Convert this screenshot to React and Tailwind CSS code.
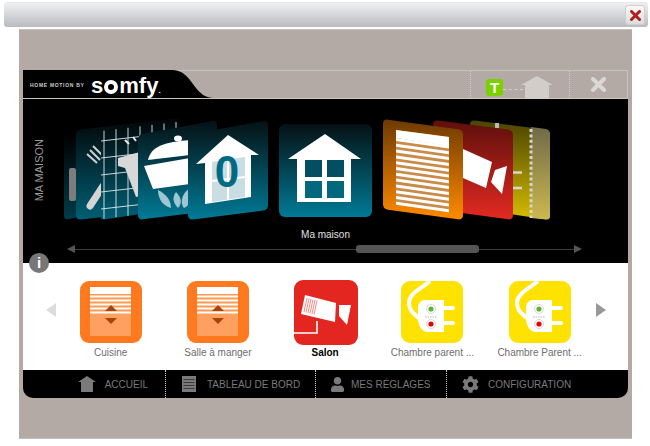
import React from 'react';
import { FaCog, FaUser } from 'react-icons/fa';

const font = { fontFamily: '"Liberation Sans", Arial, sans-serif' };

// four corner quad with rounded corners, points in page coordinates
const quad = (pts, r = 5) => {
  let d = '';
  pts.forEach((p, i) => {
    const prev = pts[(i + 3) % 4];
    const next = pts[(i + 1) % 4];
    const toward = (a, b) => {
      const len = Math.hypot(b[0] - a[0], b[1] - a[1]);
      return [a[0] + ((b[0] - a[0]) * r) / len, a[1] + ((b[1] - a[1]) * r) / len];
    };
    const s = toward(p, prev);
    const e = toward(p, next);
    d += `${i === 0 ? 'M' : 'L'}${s[0]} ${s[1]} Q${p[0]} ${p[1]} ${e[0]} ${e[1]} `;
  });
  return d + 'Z';
};

const Grad = ({ id, from, to }) => (
  <linearGradient id={id} x1="0" y1="0" x2="0" y2="1">
    <stop offset="0" stopColor={from} />
    <stop offset="1" stopColor={to} />
  </linearGradient>
);

const Carousel = () => {
  const blinds = [];
  for (let i = 0; i < 12; i++) {
    const y = 138 + i * 5.8;
    blinds.push(<polygon key={i} points={`396,${y} 449,${y + 7.5} 449,${y + 10.5} 396,${y + 3}`} fill="#fff" />);
  }
  const tilesV = [104, 116, 128, 140, 152, 164, 176];
  const tilesH = [141, 158, 175, 192, 209];

  return (
    <svg width="573" height="125" viewBox="55 99 573 125" className="block">
      <defs>
        <Grad id="teal" from="#051114" to="#007a96" />
        <Grad id="tealDark" from="#020608" to="#005f75" />
        <Grad id="tealDeep" from="#000" to="#003c48" />
        <Grad id="orange" from="#6e3a00" to="#ff8a00" />
        <Grad id="red" from="#5e0f0c" to="#e32a22" />
        <Grad id="yellow" from="#4a4300" to="#d6bd00" />
        <Grad id="yellowLight" from="#6f6a48" to="#cdb94f" />
      </defs>

      {/* left stack */}
      <path d={quad([[64, 137], [90, 132], [90, 215], [64, 220]], 4)} fill="url(#tealDeep)" />
      <rect x="69" y="168" width="7" height="33" rx="2" fill="#7d7d7d" />
      <path d={quad([[76, 130], [180, 118], [180, 208], [76, 220]], 5)} fill="url(#tealDark)" />
      <path d="M90 206 L103 186" stroke="#d4d4d4" strokeWidth="7" strokeLinecap="round" />
      <path d="M87 154 L97 163 M90 150 L100 160 M93 146 L102 155" stroke="#cfcfcf" strokeWidth="2" />
      <path d={quad([[101, 130], [180, 120], [180, 208], [101, 220]], 3)} fill="url(#tealDark)" />
      <g stroke="#dfe9eb" strokeWidth="0.9">
        {tilesV.map((x) => (
          <line key={x} x1={x} y1={131 - (x - 101) * 0.12} x2={x} y2={219 - (x - 101) * 0.12} />
        ))}
        {tilesH.map((y) => (
          <line key={y} x1="101" y1={y} x2="180" y2={y - 9} />
        ))}
      </g>
      <polygon points="118,158 140,152 140,196 136,197 125,168 118,166" fill="#d8d8d8" />
      <path d="M125 140 L129 144 M133 137 L136 141" stroke="#e8e8e8" strokeWidth="2" />
      <path d={quad([[138, 135], [217, 120], [217, 210], [138, 220]], 5)} fill="url(#teal)" />
      <path d="M148 160 C151 146 165 142 190 140 L190 155 Z" fill="#fff" />
      <ellipse cx="178" cy="138.5" rx="4" ry="3" fill="#fff" />
      <polygon points="144,166 190,158 190,184 153,189" fill="#fff" />
      <path d="M158 190 C166 194 171 200 171 208 C163 206 158 199 158 190 Z M176 192 C181 197 183 203 178 208 C173 203 172 197 176 192 Z M190 188 C180 195 181 204 184 208 C190 206 191 199 190 188 Z" fill="#9cc7d2" />

      {/* house with counter */}
      <path d={quad([[188, 135], [268, 120], [268, 210], [188, 220]], 5)} fill="url(#teal)" />
      <polygon points="228,135 259,155 251,155 251,197 205,204 205,163 196,164" fill="#fff" />
      <polygon points="212,162 245,157 245,197 212,202" fill="#c9dde3" />
      <path d="M228 160 V200 M212 181 L245 177" stroke="#fff" strokeWidth="2" />
      <text x="227" y="187" textAnchor="middle" fontSize="44" fontWeight="700" fill="#006a85" style={font}>0</text>

      {/* right stack */}
      <path d={quad([[470, 120], [550, 130], [550, 220], [470, 208]], 5)} fill="url(#yellow)" />
      <path d="M531 127 L546 129 Q550 130 550 134 L550 216 Q550 220 546 219.5 L531 218 Z" fill="url(#yellowLight)" />
      <line x1="531" y1="129" x2="531" y2="218" stroke="#d4d4d4" strokeWidth="3" strokeDasharray="3 2.4" />
      <rect x="495" y="123" width="4" height="5" fill="#bbb" />
      <path d="M512 172.5 H522 M512 188 H522" stroke="#d8d8c8" strokeWidth="2.5" />
      <path d={quad([[433, 120], [513, 130], [513, 220], [433, 209]], 5)} fill="url(#red)" />
      <polygon points="463,149 492,162 486,188 463,178" fill="#fff" />
      <polygon points="495,170 507,166 502,194 491,182" fill="#fff" />
      <path d={quad([[383, 119], [463, 130], [463, 220], [383, 209]], 5)} fill="url(#orange)" />
      <polygon points="396,130 449,137 449,211 396,203" fill="#c98b4a" />
      <polygon points="396,130 449,137 449,146 396,138" fill="#fff" />
      {blinds}

      {/* selected */}
      <rect x="279" y="124" width="93" height="93" rx="6" fill="url(#teal)" />
      <polygon points="325,134 361,159 351,159 351,202 297,202 297,159 288,159" fill="#fff" />
      <rect x="305" y="160" width="17" height="17" fill="#024f61" />
      <rect x="327" y="160" width="17" height="17" fill="#024f61" />
      <rect x="305" y="181" width="17" height="17" fill="#03677e" />
      <rect x="327" y="181" width="17" height="17" fill="#03677e" />
    </svg>
  );
};

const BlindIcon = () => (
  <svg width="62" height="62" viewBox="0 0 62 62" className="block">
    <rect width="62" height="62" rx="9" fill="#ff7a1e" />
    <rect x="10" y="6" width="41" height="49" fill="#ffa060" />
    <rect x="10" y="6" width="41" height="26" fill="#ff9850" />
    <rect x="10" y="6" width="41" height="7" fill="#fff" />
    {[14.5, 18.5, 22.5, 26.5, 30.5].map((y) => (
      <rect key={y} x="10" y={y} width="41" height="2" fill="#fff" />
    ))}
    <polygon points="31,24 25,30 37,30" fill="#a4470f" />
    <polygon points="25,37 37,37 31,43" fill="#a4470f" />
  </svg>
);

const CameraIcon = () => (
  <svg width="64" height="65" viewBox="0 0 64 65" className="block">
    <rect width="64" height="65" rx="9" fill="#e3261f" />
    <polygon points="11,15 42,23 41,42 7,34" fill="#fff" />
    <g stroke="#ef8d88" strokeWidth="1">
      <line x1="13" y1="18" x2="10" y2="32" />
      <line x1="15" y1="18.5" x2="12" y2="32.5" />
      <line x1="17" y1="19" x2="14" y2="33" />
      <line x1="19" y1="19.5" x2="16" y2="33.5" />
      <line x1="21" y1="20" x2="18" y2="34" />
      <line x1="23" y1="20.5" x2="20" y2="34.5" />
    </g>
    <polygon points="45,25 57,25 53,45 45,36" fill="#fff" />
    <path d="M23 41 V53 H0" fill="none" stroke="#fff" strokeWidth="1.6" />
  </svg>
);

const PlugIcon = () => (
  <svg width="62" height="62" viewBox="0 0 62 62" className="block">
    <rect width="62" height="62" rx="9" fill="#ffe200" />
    <path d="M29 0 C20 8 8 12 8 22 C8 30 13 33 18 37" fill="none" stroke="#fff" strokeWidth="4" />
    <path d="M24 19 H43 V51 H27 C21 51 17 45 17 37 V27 C17 22 20 19 24 19 Z" fill="#fff" />
    <path d="M43 27 H52 M43 42 H52" stroke="#fff" strokeWidth="4" strokeLinecap="round" />
    <circle cx="30" cy="28" r="4.5" fill="#fff" stroke="#c8c8c8" strokeWidth="0.7" />
    <circle cx="30" cy="28" r="2.6" fill="#5db52e" />
    <circle cx="30" cy="43" r="4.5" fill="#fff" stroke="#c8c8c8" strokeWidth="0.7" />
    <circle cx="30" cy="43" r="2.6" fill="#f00000" />
    <line x1="24" y1="36" x2="36" y2="36" stroke="#b5b5b5" strokeWidth="1.2" strokeDasharray="1.5 1" />
  </svg>
);

const rooms = [
  { label: 'Cuisine', icon: <BlindIcon /> },
  { label: 'Salle à manger', icon: <BlindIcon /> },
  { label: 'Salon', icon: <CameraIcon />, active: true },
  { label: 'Chambre parent ...', icon: <PlugIcon /> },
  { label: 'Chambre Parent ...', icon: <PlugIcon /> },
];

const Dots = () => <div className="h-full w-0 border-l border-dotted border-[#cfcfcf]" />;

const App = () => {
  return (
    <div className="w-[650px] h-[446px] bg-white pt-[2px] overflow-hidden" style={font}>
      <div className="ml-[4px] w-[644px] h-[25px] rounded-[3px] border-t border-[#e8e8e8] bg-gradient-to-b from-[#eef0f2] to-[#b9bbbe] flex items-center justify-end pr-[3px]">
        <button className="w-[20px] h-[20px] rounded-[3px] border border-[#cfcfcf] bg-gradient-to-b from-[#fafafa] to-[#dcdcdc] flex items-center justify-center">
          <svg width="11" height="11" viewBox="0 0 11 11">
            <path d="M1.5 1.5 L9.5 9.5 M9.5 1.5 L1.5 9.5" stroke="#b01e1e" strokeWidth="3" strokeLinecap="round" />
          </svg>
        </button>
      </div>

      <div className="mt-[2px] ml-[19px] w-[613px] h-[410px] bg-[#b3aaa5] border-t border-b border-[#c6bfba] pt-[40px] px-[4px]">
        {/* header */}
        <div className="relative h-[29px] border-t border-r border-b border-[#c9c3be] flex items-center">
          <svg width="190" height="29" viewBox="0 0 190 29" className="absolute left-0 -top-px">
            <path d="M0 0 H150 C170 1 170 27 190 28 H0 Z" fill="#000" />
          </svg>
          <div className="relative flex items-center ml-[7px] pt-[2px]">
            <span className="text-[5px] font-bold tracking-[0.7px] text-[#cfcfcf] w-[61px] whitespace-nowrap">HOME MOTION BY</span>
            <span className="flex items-center text-white font-bold text-[22px] leading-none">
              s
              <span className="inline-block w-[14px] h-[14px] rounded-full border-[4px] border-white mx-[1px] mt-[3px]" />
              mfy
              <span className="text-[8px] self-end mb-[2px]">.</span>
            </span>
          </div>
          <div className="ml-auto h-full flex items-stretch">
            <Dots />
            <div className="w-[98px] flex items-end relative">
              <div className="ml-[15px] mb-[2px] w-[17px] h-[17px] rounded-[3px] bg-[#7cd000] text-white font-bold text-[15px] leading-[17px] text-center">T</div>
              <div className="w-[20px] mb-[8px] border-t border-dashed border-[#d6d1cd]" />
              <svg width="34" height="24" viewBox="0 0 34 24" className="-ml-[2px] -mb-px">
                <path d="M16 1 L32 10 H28 V24 H4 V10 H0 Z" fill="#d2cdc8" />
              </svg>
            </div>
            <Dots />
            <div className="w-[57px] flex items-center justify-center">
              <svg width="15" height="15" viewBox="0 0 15 15">
                <path d="M2 2 L13 13 M13 2 L2 13" stroke="#dbd7d2" strokeWidth="4" strokeLinecap="round" />
              </svg>
            </div>
          </div>
        </div>

        {/* cover flow */}
        <div className="relative h-[164px] bg-black flex flex-col">
          <div className="flex">
            <div className="w-[32px] flex items-center justify-center pt-[17px]">
              <span className="[writing-mode:vertical-rl] rotate-180 text-[11px] text-[#9a9a9a] whitespace-nowrap">MA MAISON</span>
            </div>
            <Carousel />
          </div>
          <div className="h-[20px] flex items-center justify-center text-[10px] text-[#e0e0e0]">Ma maison</div>
          <div className="h-[10px] flex items-center pl-[44px] pr-[46px]">
            <div className="w-0 h-0 border-y-[4px] border-y-transparent border-r-[8px] border-r-[#555]" />
            <div className="relative flex-1 h-px bg-[#3d3d3d]">
              <div className="absolute left-[281px] -top-[4px] w-[123px] h-[8px] rounded-[3px] bg-[#555]" />
            </div>
            <div className="w-0 h-0 border-y-[4px] border-y-transparent border-l-[8px] border-l-[#555]" />
          </div>
          <div className="absolute left-[6px] -bottom-[10px] z-10 w-[20px] h-[20px] rounded-full bg-[#777] text-white text-[15px] font-bold leading-[20px] text-center">i</div>
        </div>

        {/* rooms */}
        <div className="h-[107px] bg-white flex items-start pt-[18px] pl-[23px]">
          <div className="mt-[22px] w-0 h-0 border-y-[7px] border-y-transparent border-r-[10px] border-r-[#dcdcdc]" />
          <div className="ml-[1px] flex">
            {rooms.map((room) => (
              <div key={room.label} className="w-[107.25px] flex flex-col items-center">
                <div className={room.active ? '-my-[1.5px] ml-[1px]' : ''}>{room.icon}</div>
                <div className={`mt-[3px] text-[10px] leading-[14px] whitespace-nowrap ${room.active ? 'text-black font-bold' : 'text-[#6e6e6e]'}`}>
                  {room.label}
                </div>
              </div>
            ))}
          </div>
          <div className="mt-[22px] ml-[3px] w-0 h-0 border-y-[7px] border-y-transparent border-l-[10px] border-l-[#999]" />
        </div>

        {/* footer nav */}
        <div className="h-[28px] bg-black rounded-b-[10px] flex text-[10px] text-[#7a7a7a]">
          <div className="w-[142px] flex items-center justify-end pr-[17px] gap-[9px]">
            <svg width="18" height="16" viewBox="0 0 18 16">
              <path d="M9 0 L18 6 H15 V16 H3 V6 H0 Z" fill="#7a7a7a" />
            </svg>
            ACCUEIL
          </div>
          <Dots />
          <div className="w-[149px] flex items-center pl-[16px] gap-[11px]">
            <svg width="14" height="16" viewBox="0 0 14 16">
              <rect width="14" height="16" fill="#7a7a7a" />
              <path d="M1.5 3.5 H12.5 M1.5 6.5 H12.5 M1.5 9.5 H12.5 M1.5 12.5 H12.5" stroke="#3a3a3a" strokeWidth="1" />
            </svg>
            TABLEAU DE BORD
          </div>
          <Dots />
          <div className="w-[130px] flex items-center pl-[14px] gap-[6px]">
            <FaUser className="w-[15px] h-[15px]" />
            MES RÉGLAGES
          </div>
          <Dots />
          <div className="flex items-center pl-[15px] gap-[9px]">
            <FaCog className="w-[17px] h-[17px]" />
            CONFIGURATION
          </div>
        </div>
      </div>
    </div>
  );
};

export default App;
